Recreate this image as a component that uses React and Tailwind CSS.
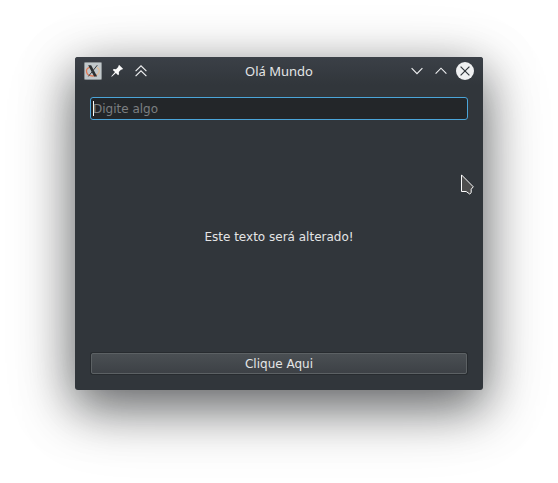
function AppIcon() {
  return (
    <svg width="18" height="18" viewBox="0 0 18 18" className="block">
      <rect x="0.5" y="0.5" width="17" height="17" rx="0.8" fill="#c1c8cb" stroke="#8b9194" />
      <path d="M6 5.2C3.3 6 2.1 8 2.6 10.2c.5 2.4 3 3.8 6 3.8 2 0 3.3-.5 4.3-1.3" fill="none" stroke="#e27a55" strokeWidth="1.3" />
      <path d="M12.8 5.3c2 1 2.8 2.6 2.4 4.4-.3 1.5-1 2.3-2.2 3" fill="none" stroke="#dfbd9c" strokeWidth="1.3" />
      <path d="M4.2 3.2h3l5.9 11.2h-3z" fill="#2b2f31" />
      <path d="M13.3 3.2 4.4 14.4" fill="none" stroke="#3a3e41" strokeWidth="1" />
    </svg>
  );
}

function PinIcon() {
  return (
    <svg width="12" height="12" viewBox="0 0 12 12" className="block" fill="#fcfcfc">
      <path d="M8.2 0 12 3.8 10.9 4.8 10.2 4.6 7.8 7.1 8 9.3 7.1 10.2 4.9 8 .8 11.7.3 11.2 4 7.1 1.8 4.9 2.7 4 5 4.2 7.4 1.8 7.2 1z" />
    </svg>
  );
}

function Chevron({ d, h }) {
  return (
    <svg width="12" height={h} viewBox={`0 0 12 ${h}`} className="block" fill="none" stroke="#eff0f1" strokeWidth="1.15">
      <path d={d} />
    </svg>
  );
}

function CloseIcon() {
  return (
    <svg width="18" height="18" viewBox="0 0 18 18" className="block">
      <circle cx="9" cy="9" r="9" fill="#eff0f1" />
      <path d="M4.6 4.6 13.4 13.4M13.4 4.6 4.6 13.4" stroke="#31363b" strokeWidth="1.2" />
    </svg>
  );
}

export default function App() {
  return (
    <div className="h-[483px] w-[558px] overflow-hidden bg-white pl-[75px] pt-[57px] font-['DejaVu_Sans',sans-serif] text-[12px] text-[#e4e5e6]">
      <div className="relative flex h-[333px] w-[408px] flex-col rounded-[3px] bg-[#31363b] shadow-[0_16px_48px_0_rgba(4,7,10,0.54),0_18px_72px_0_rgba(4,7,10,0.2)]">
        <header className="grid h-7 grid-cols-[1fr_auto_1fr] items-center rounded-t-[3px] bg-linear-to-b from-[#3b4047] to-[#31363b] pl-[9px] pr-[9px]">
          <div className="flex items-center gap-[9px]">
            <AppIcon />
            <PinIcon />
            <div className="ml-[3px]">
              <Chevron h={12} d="M.6 6.1 6 .8 11.4 6.1M.6 11.1 6 5.8 11.4 11.1" />
            </div>
          </div>
          <h1 className="font-['Noto_Sans',sans-serif] text-[13px] leading-7">Olá Mundo</h1>
          <div className="flex items-center justify-end gap-3">
            <Chevron h={8} d="M.6 1.2 6 6.6 11.4 1.2" />
            <Chevron h={8} d="M.6 6.6 6 1.2 11.4 6.6" />
            <div className="-ml-[3px]">
              <CloseIcon />
            </div>
          </div>
        </header>
        <main className="flex flex-1 flex-col px-[15px] pb-4 pt-3">
          <div className="flex h-[23px] items-center rounded-[3px] border border-[#4ba5d9] bg-[#232629] pl-[2px]">
            <span className="h-[15px] w-px bg-[#fcfcfc]" />
            <span className="-ml-px leading-4 text-[#7c7f81]">Digite algo</span>
          </div>
          <p className="flex flex-1 items-center justify-center leading-4">Este texto será alterado!</p>
          <button className="mx-px flex h-[21px] items-center justify-center rounded-[2px] border border-[#5c6164] bg-linear-to-b from-[#4a4f53] to-[#3d4146] pt-px leading-4 shadow-[0_0_0_1px_#272b2f]">
            Clique Aqui
          </button>
        </main>
        <svg className="absolute left-[386px] top-[117px]" width="14" height="22" viewBox="0 0 14 22">
          <path d="M.5.9 12.3 12.8 10.2 15.2v3.5L8.7 20 5.2 17.5H.5z" fill="#4d4d4d" stroke="#fcfcfc" strokeWidth="1" />
        </svg>
      </div>
    </div>
  );
}
